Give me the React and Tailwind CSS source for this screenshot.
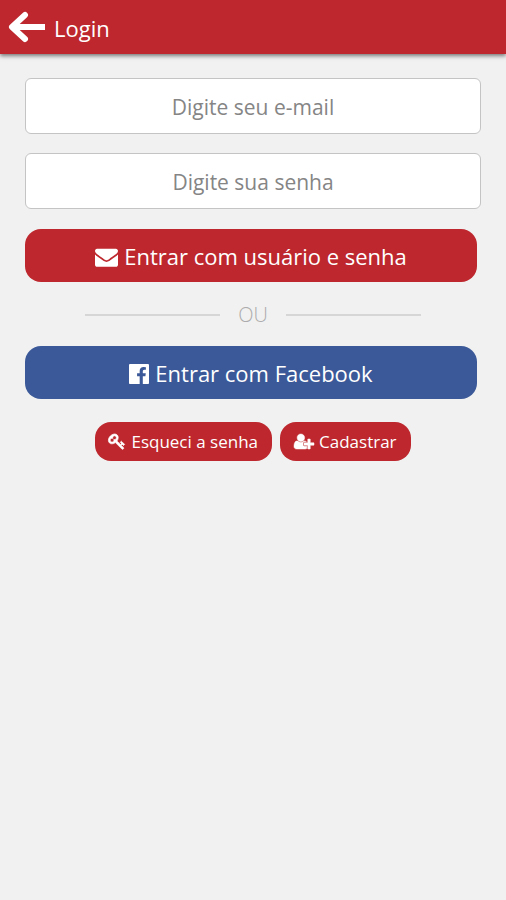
const ICONS = {
  envelope: {
    box: '0 128 1792 1536',
    d: 'M1792 710v794q0 66-47 113t-113 47h-1472q-66 0-113-47t-47-113v-794q44 49 101 87 362 246 497 345 57 42 92.5 65.5t94.5 48 110 24.5h2q51 0 110-24.5t94.5-48 92.5-65.5q170-123 498-345 57-39 100-87zm0-294q0 79-49 151t-122 123q-376 261-468 325-10 7-42.5 31t-54 38.5-52 32.5-57.5 27-50 9h-2q-23 0-50-9t-57.5-27-52-32.5-54-38.5-42.5-31q-91-64-262-182.5t-205-142.5q-62-42-117-115.5t-55-136.5q0-78 41.5-130t118.5-52h1472q65 0 112.5 47t47.5 113z',
  },
  facebook: {
    box: '128 128 1536 1536',
    d: 'M1579 128q35 0 60 25t25 60v1366q0 35-25 60t-60 25h-391v-595h199l30-232h-229v-148q0-56 23.5-84t91.5-28l122-1v-207q-63-9-178-9-136 0-217.5 80t-81.5 226v171h-200v232h200v595h-735q-35 0-60-25t-25-60v-1366q0-35 25-60t60-25h1366z',
  },
  key: {
    box: '64 128 1664 1664',
    d: 'M832 512q0-80-56-136t-136-56-136 56-56 136q0 42 19 83-41-19-83-19-80 0-136 56t-56 136 56 136 136 56 136-56 56-136q0-42-19-83 41 19 83 19 80 0 136-56t56-136zm851 704q0 17-49 66t-66 49q-9 0-28.5-16t-36.5-33-38.5-40-24.5-26l-96 96 220 220q28 28 28 68 0 42-39 81t-81 39q-40 0-68-28l-671-671q-176 131-365 131-163 0-265.5-102.5t-102.5-265.5q0-160 95-313t248-248 313-95q163 0 265.5 102.5t102.5 265.5q0 189-131 365l355 355 96-96q-3-3-26-24.5t-40-38.5-33-36.5-16-28.5q0-17 49-66t66-49q13 0 23 10 6 6 46 44.5t82 79.5 86.5 86 73 78 28.5 41z',
  },
  userPlus: {
    box: '0 128 2048 1536',
    d: 'M704 896q-159 0-271.5-112.5t-112.5-271.5 112.5-271.5 271.5-112.5 271.5 112.5 112.5 271.5-112.5 271.5-271.5 112.5zm960 128h352q13 0 22.5 9.5t9.5 22.5v192q0 13-9.5 22.5t-22.5 9.5h-352v352q0 13-9.5 22.5t-22.5 9.5h-192q-13 0-22.5-9.5t-9.5-22.5v-352h-352q-13 0-22.5-9.5t-9.5-22.5v-192q0-13 9.5-22.5t22.5-9.5h352v-352q0-13 9.5-22.5t22.5-9.5h192q13 0 22.5 9.5t9.5 22.5v352zm-736 224q0 52 38 90t90 38h256v238q-68 50-171 50h-874q-121 0-194-69t-73-190q0-53 3.5-103.5t14-109 26.5-108.5 43-97.5 62-81 85.5-53.5 111.5-20q19 0 39 17 79 61 154.5 91.5t164.5 30.5 164.5-30.5 154.5-91.5q20-17 39-17 132 0 217 96h-223q-52 0-90 38t-38 90v192z',
  },
};

function Icon({ name, className }) {
  const icon = ICONS[name];
  return (
    <svg viewBox={icon.box} fill="currentColor" stroke="currentColor" aria-hidden="true" className={`shrink-0 overflow-visible ${className}`}>
      <path d={icon.d} />
    </svg>
  );
}

function Field({ id, type, placeholder }) {
  return (
    <input
      id={id}
      type={type}
      aria-label={placeholder}
      placeholder={placeholder}
      className="block h-14 w-full rounded-md border border-[#c4c4c4] bg-white px-4 pt-[2px] text-center text-[21px] text-[#444444] outline-none placeholder:text-[#858585]"
    />
  );
}

export default function App() {
  return (
    <div className="min-h-screen bg-[#f1f1f1] font-['Open_Sans','Noto_Sans',sans-serif]">
      <header className="flex h-[54px] items-center gap-2 bg-[#bd272d] px-2 text-white shadow-[0_2px_4px_rgba(0,0,0,0.5)]">
        <button type="button" aria-label="Voltar">
          <svg viewBox="0 0 38 32" fill="none" stroke="currentColor" strokeWidth="6" className="block h-8 w-[38px]" aria-hidden="true">
            <path d="M5 16H37" />
            <path d="M17 4L4 16L17 28" strokeLinecap="round" strokeLinejoin="round" />
          </svg>
        </button>
        <h1 className="pt-[2px] text-[22px] leading-8">Login</h1>
      </header>

      <main className="px-[25px] pt-6">
        <form onSubmit={(event) => event.preventDefault()}>
          <div className="flex flex-col gap-[19px]">
            <Field id="email" type="email" placeholder="Digite seu e-mail" />
            <Field id="senha" type="password" placeholder="Digite sua senha" />
          </div>

          <div className="mr-1 mt-5">
            <button type="submit" className="flex h-[53px] w-full items-center justify-center gap-[6px] rounded-2xl bg-[#bd272d] pt-[2px] text-[22px] text-white">
              <Icon name="envelope" className="h-5 w-[23px]" />
              Entrar com usuário e senha
            </button>
          </div>

          <div className="flex h-16 items-center justify-center gap-[18px] pt-[2px] text-xl font-light text-[#acacac]">
            <span className="h-[2px] w-[135px] bg-[#d6d6d6]" />
            OU
            <span className="h-[2px] w-[135px] bg-[#d6d6d6]" />
          </div>

          <div className="mr-1">
            <button type="button" className="flex h-[53px] w-full items-center justify-center gap-[6px] rounded-2xl bg-[#3b5998] pt-[2px] text-[22px] text-white">
              <Icon name="facebook" className="h-5 w-5" />
              Entrar com Facebook
            </button>
          </div>

          <div className="mt-[23px] flex justify-center gap-2 text-[17px] text-white">
            <button type="button" className="flex h-[39px] items-center gap-[6px] rounded-2xl bg-[#bd272d] px-[14px]">
              <Icon name="key" className="h-4 w-4 stroke-[70px]" />
              Esqueci a senha
            </button>
            <button type="button" className="flex h-[39px] items-center gap-[5px] rounded-2xl bg-[#bd272d] px-[14px]">
              <Icon name="userPlus" className="h-[15px] w-5 stroke-[50px]" />
              Cadastrar
            </button>
          </div>
        </form>
      </main>
    </div>
  );
}
